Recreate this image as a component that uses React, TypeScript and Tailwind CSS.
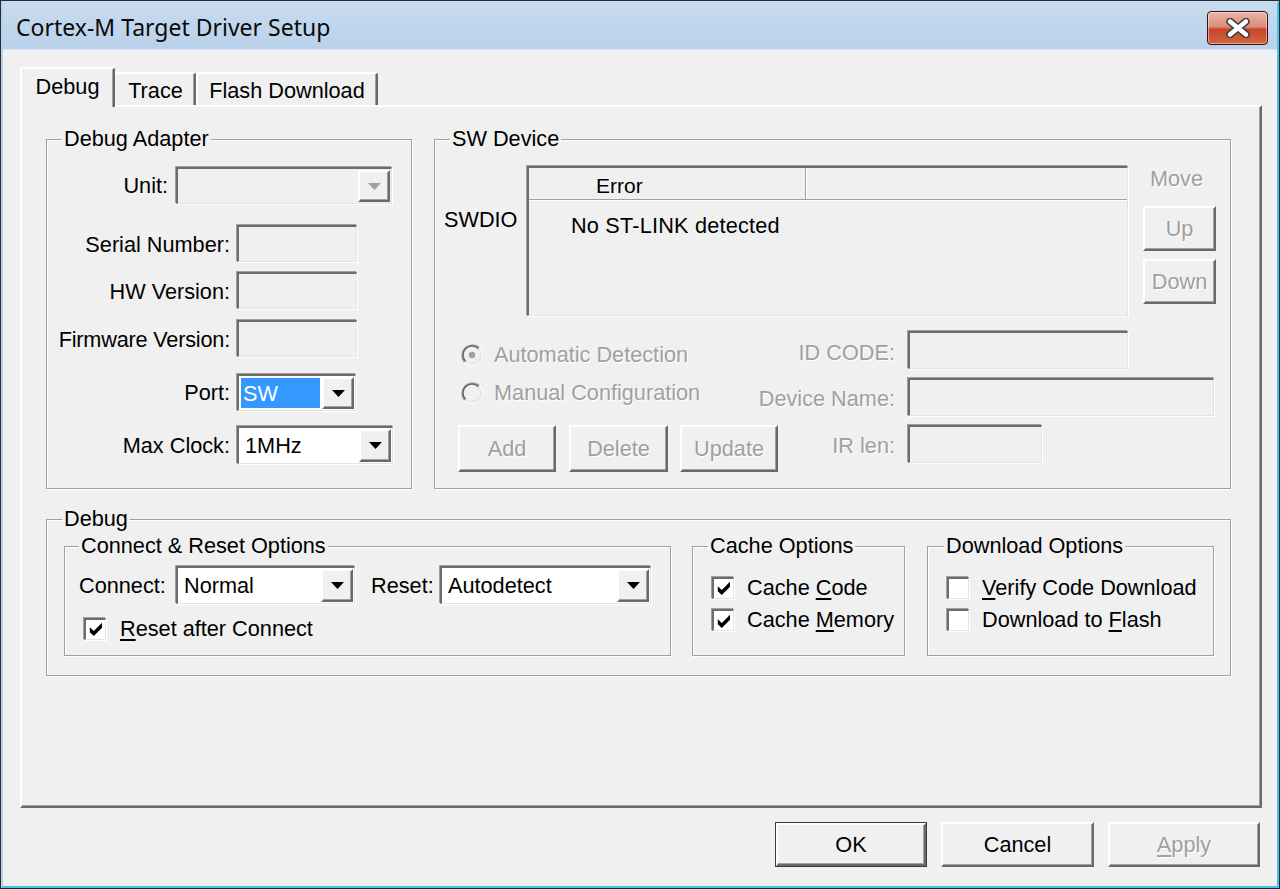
import React from "react";

const SUNKEN =
  "border-t-2 border-l-2 border-b border-r border-t-[#6d6d6d] border-l-[#6d6d6d] border-b-[#e3e3e3] border-r-[#e3e3e3] shadow-[-1px_-1px_0_#a0a0a0,1px_1px_0_#ffffff]";
const RAISED =
  "border-t-2 border-l-2 border-b-2 border-r-2 border-t-white border-l-white border-b-[#696969] border-r-[#696969] shadow-[inset_-1px_-1px_0_#a0a0a0]";
const DIS = "text-[#a0a0a0] [text-shadow:1px_1px_0_#ffffff]";

function Group({
  title,
  cls,
  titleCls,
  children,
}: {
  title: string;
  cls: string;
  titleCls: string;
  children?: React.ReactNode;
}) {
  return (
    <div
      className={`shrink-0 flex flex-col border border-[#a0a0a0] shadow-[inset_1px_1px_0_#ffffff,1px_1px_0_#ffffff] ${cls}`}
    >
      <div className="flex h-[12px] shrink-0">
        <span className={`-mt-[13px] h-[24px] px-[2px] bg-[#f0f0f0] whitespace-nowrap ${titleCls}`}>
          {title}
        </span>
      </div>
      {children}
    </div>
  );
}

function Arrow({ disabled }: { disabled?: boolean }) {
  return (
    <div
      className={`w-[32px] my-[1px] mr-[1px] shrink-0 flex items-center justify-center bg-[#f0f0f0] ${RAISED}`}
    >
      <svg width="13" height="7" viewBox="0 0 13 7">
        <path d="M0 0 H13 L6.5 7 Z" fill={disabled ? "#a0a0a0" : "#000000"} />
      </svg>
    </div>
  );
}

function Combo({
  cls,
  value,
  sel,
  disabled,
}: {
  cls: string;
  value?: string;
  sel?: boolean;
  disabled?: boolean;
}) {
  return (
    <div className={`flex shrink-0 ${disabled ? "bg-[#f0f0f0]" : "bg-white"} ${SUNKEN} ${cls}`}>
      <div className="flex-1 flex items-center p-[2px] min-w-0">
        {sel ? (
          <span className="h-full w-full bg-[#3399ff] text-white flex items-center pl-[2px] pt-[1px]">
            {value}
          </span>
        ) : (
          <span className="pl-[4px] pt-[1px] whitespace-nowrap">{value}</span>
        )}
      </div>
      <Arrow disabled={disabled} />
    </div>
  );
}

function Box({ cls }: { cls: string }) {
  return <div className={`shrink-0 bg-[#f0f0f0] ${SUNKEN} ${cls}`} />;
}

function Btn({
  cls,
  disabled,
  children,
}: {
  cls: string;
  disabled?: boolean;
  children: React.ReactNode;
}) {
  return (
    <div
      className={`shrink-0 flex items-center justify-center bg-[#f0f0f0] ${RAISED} ${disabled ? DIS : ""} ${cls}`}
    >
      {children}
    </div>
  );
}

function Check({ checked }: { checked?: boolean }) {
  return (
    <div className={`w-[22px] h-[22px] shrink-0 bg-white flex items-center justify-center ${SUNKEN}`}>
      {checked && (
        <svg width="16" height="16" viewBox="0 0 16 16">
          <path d="M1.8 6.2 L5.8 10 L14 1.8 L14 6.8 L5.8 15 L1.8 11.2 Z" fill="#000000" />
        </svg>
      )}
    </div>
  );
}

function Radio({ checked }: { checked?: boolean }) {
  return (
    <svg width="24" height="24" viewBox="0 0 24 24" className="shrink-0">
      <circle cx="12" cy="12" r="10" fill="#f0f0f0" />
      <path d="M19.4 4.6 A10.5 10.5 0 0 0 4.6 19.4" stroke="#a0a0a0" strokeWidth="1.6" fill="none" />
      <path d="M18.4 5.6 A9 9 0 0 0 5.6 18.4" stroke="#696969" strokeWidth="1.6" fill="none" />
      <path d="M4.6 19.4 A10.5 10.5 0 0 0 19.4 4.6" stroke="#ffffff" strokeWidth="1.6" fill="none" />
      <path d="M5.6 18.4 A9 9 0 0 0 18.4 5.6" stroke="#e3e3e3" strokeWidth="1.6" fill="none" />
      {checked && <circle cx="12" cy="12" r="3.2" fill="#a0a0a0" />}
    </svg>
  );
}

export default function App() {
  return (
    <div className="w-[1280px] h-[889px] overflow-hidden border border-[#2b2b2b] bg-[#f0f0f0] font-['Liberation_Sans',Arial,sans-serif] text-[21.7px] leading-[24px] text-black">
      <div className="h-full flex flex-col border-2 border-t-[#c5d9ef] border-l-[#b9d1ea] border-r-[#3ec6ee] border-b-[#3ec6ee]">
        {/* Title bar */}
        <div className="h-[47px] shrink-0 flex items-center bg-[linear-gradient(to_bottom,#c8dbf0,#b9d1ea)] border-b border-b-[#dce7f3]">
          <span className="ml-[13px] mt-[1px] font-['Noto_Sans',sans-serif] text-[23px] leading-[30px] text-[#0a0a0a]">
            Cortex-M Target Driver Setup
          </span>
          <div className="ml-auto mr-[9px] mt-[3px] w-[61px] h-[34px] rounded-[4px] border border-[#3b0d0d] bg-[linear-gradient(to_bottom,#ebb4a5_0%,#dc8d7a_46%,#c7462a_54%,#d2653f_100%)] shadow-[inset_0_0_0_1px_rgba(255,255,255,0.45)] flex items-center justify-center">
            <svg width="26" height="20" viewBox="0 0 26 20">
              <path d="M5 3.5 L21 16.5 M21 3.5 L5 16.5" stroke="#3f3f3f" strokeWidth="7.5" strokeLinecap="round" />
              <path d="M5 3.5 L21 16.5 M21 3.5 L5 16.5" stroke="#ffffff" strokeWidth="4.5" strokeLinecap="round" />
            </svg>
          </div>
        </div>

        {/* Body */}
        <div className="flex-1 flex flex-col pl-[17px] pr-[15px] pt-[17px]">
          {/* Tabs */}
          <div className="h-[38px] shrink-0 flex items-end">
            <div className="relative z-10 w-[95px] h-[40px] -mb-[2px] bg-[#f0f0f0] rounded-t-[3px] border-t-2 border-l-2 border-r-2 border-t-white border-l-white border-r-[#696969] shadow-[inset_-1px_0_0_#a0a0a0] flex items-center justify-center pb-[2px]">
              Debug
            </div>
            <div className="w-[83px] h-[33px] -ml-[2px] bg-[#f0f0f0] rounded-t-[3px] border-t-2 border-l-2 border-r-2 border-t-white border-l-white border-r-[#696969] shadow-[inset_-1px_0_0_#a0a0a0] flex items-center justify-center pt-[2px] pl-[2px]">
              Trace
            </div>
            <div className="w-[182px] h-[33px] bg-[#f0f0f0] rounded-t-[3px] border-t-2 border-l-2 border-r-2 border-t-white border-l-white border-r-[#696969] shadow-[inset_-1px_0_0_#a0a0a0] flex items-center justify-center pt-[2px]">
              Flash Download
            </div>
          </div>

          {/* Panel */}
          <div className="w-[1242px] h-[703px] shrink-0 flex flex-col pl-[24px] pt-[32px] border-t-2 border-l-2 border-b-2 border-r-2 border-t-white border-l-white border-b-[#696969] border-r-[#696969] shadow-[inset_-1px_-1px_0_#a0a0a0]">
            <div className="flex">
              {/* Debug Adapter */}
              <Group title="Debug Adapter" cls="w-[366px] h-[350px]" titleCls="ml-[15px]">
                <div className="mt-[15px] h-[37px] flex items-center">
                  <span className="w-[121px] text-right">Unit:</span>
                  <Combo cls="ml-[8px] w-[216px] h-[37px]" disabled />
                </div>
                <div className="mt-[21px] h-[37px] flex items-center">
                  <span className="w-[183px] text-right pt-[3px]">Serial Number:</span>
                  <Box cls="ml-[7px] w-[120px] h-[37px]" />
                </div>
                <div className="mt-[10px] h-[37px] flex items-center">
                  <span className="w-[183px] text-right pt-[2px]">HW Version:</span>
                  <Box cls="ml-[7px] w-[120px] h-[37px]" />
                </div>
                <div className="mt-[11px] h-[37px] flex items-center">
                  <span className="w-[183px] text-right whitespace-nowrap pt-[2px] tracking-[-0.2px]">Firmware Version:</span>
                  <Box cls="ml-[7px] w-[120px] h-[37px]" />
                </div>
                <div className="mt-[17px] h-[37px] flex items-center">
                  <span className="w-[183px] text-right">Port:</span>
                  <Combo cls="ml-[7px] w-[119px] h-[37px]" value="SW" sel />
                </div>
                <div className="mt-[15px] h-[38px] flex items-center">
                  <span className="w-[183px] text-right pt-[2px]">Max Clock:</span>
                  <Combo cls="ml-[7px] w-[156px] h-[38px]" value="1MHz" />
                </div>
              </Group>

              {/* SW Device */}
              <Group title="SW Device" cls="ml-[22px] w-[797px] h-[350px]" titleCls="ml-[15px]">
                <div className="mt-[14px] flex items-start">
                  <div className="w-[92px] shrink-0 pl-[9px] pt-[42px]">SWDIO</div>
                  <div className={`w-[601px] h-[150px] shrink-0 bg-[#f0f0f0] flex flex-col ${SUNKEN}`}>
                    <div className="h-[32px] shrink-0 flex border-b border-b-[#a0a0a0] shadow-[0_1px_0_#ffffff]">
                      <div className="w-[277px] h-full pl-[67px] pt-[5px] flex items-center text-[21px] border-r border-r-[#a0a0a0] shadow-[1px_0_0_#ffffff]">
                        Error
                      </div>
                      <div className="flex-1" />
                    </div>
                    <div className="pl-[42px] pt-[14px] tracking-[0.2px]">No ST-LINK detected</div>
                  </div>
                  <div className="ml-[15px] w-[73px] shrink-0 flex flex-col">
                    <div className={`h-[24px] text-center pr-[6px] pt-[1px] ${DIS}`}>Move</div>
                    <Btn cls="mt-[16px] w-[73px] h-[45px]" disabled>
                      Up
                    </Btn>
                    <Btn cls="mt-[8px] w-[73px] h-[45px]" disabled>
                      Down
                    </Btn>
                  </div>
                </div>

                <div className="mt-[15px] flex">
                  <div className="ml-[23px] w-[320px] shrink-0 flex flex-col">
                    <div className="mt-[12px] h-[24px] flex items-center pl-[2px]">
                      <Radio checked />
                      <span className={`ml-[10px] whitespace-nowrap ${DIS}`}>Automatic Detection</span>
                    </div>
                    <div className="mt-[14px] h-[24px] flex items-center pl-[2px]">
                      <Radio />
                      <span className={`ml-[10px] whitespace-nowrap ${DIS}`}>Manual Configuration</span>
                    </div>
                    <div className="mt-[20px] flex">
                      <Btn cls="w-[98px] h-[47px]" disabled>
                        Add
                      </Btn>
                      <Btn cls="ml-[13px] w-[99px] h-[47px]" disabled>
                        Delete
                      </Btn>
                      <Btn cls="ml-[12px] w-[98px] h-[47px]" disabled>
                        Update
                      </Btn>
                    </div>
                  </div>
                  <div className="flex flex-col">
                    <div className="h-[38px] flex items-start">
                      <span className={`w-[117px] pt-[10px] flex justify-end whitespace-nowrap ${DIS}`}>ID CODE:</span>
                      <Box cls="ml-[13px] w-[220px] h-[38px]" />
                    </div>
                    <div className="mt-[9px] h-[38px] flex items-start">
                      <span className={`w-[117px] pt-[9px] flex justify-end whitespace-nowrap ${DIS}`}>Device Name:</span>
                      <Box cls="ml-[13px] w-[306px] h-[38px]" />
                    </div>
                    <div className="mt-[9px] h-[38px] flex items-start">
                      <span className={`w-[117px] pt-[9px] flex justify-end whitespace-nowrap ${DIS}`}>IR len:</span>
                      <Box cls="ml-[13px] w-[134px] h-[38px]" />
                    </div>
                  </div>
                </div>
              </Group>
            </div>

            {/* Debug group */}
            <Group title="Debug" cls="mt-[30px] w-[1185px] h-[157px]" titleCls="ml-[15px]">
              <div className="mt-[14px] pl-[17px] flex">
                <Group title="Connect & Reset Options" cls="w-[607px] h-[110px]" titleCls="ml-[14px]">
                  <div className="mt-[7px] h-[38px] flex items-center pl-[14px]">
                    <span className="w-[97px] shrink-0 pt-[1px]">Connect:</span>
                    <Combo cls="w-[179px] h-[38px]" value="Normal" />
                    <span className="ml-[16px] w-[69px] shrink-0 pt-[1px]">Reset:</span>
                    <Combo cls="w-[211px] h-[38px]" value="Autodetect" />
                  </div>
                  <div className="mt-[12px] flex items-center pl-[19px]">
                    <Check checked />
                    <span className="ml-[14px] pt-[1px]">
                      <span className="underline underline-offset-[3px]">R</span>eset after Connect
                    </span>
                  </div>
                </Group>

                <Group title="Cache Options" cls="ml-[21px] w-[213px] h-[110px]" titleCls="ml-[15px]">
                  <div className="mt-[16px] flex items-center pl-[19px]">
                    <Check checked />
                    <span className="ml-[13px] whitespace-nowrap pt-[1px]">
                      Cache <span className="underline underline-offset-[3px]">C</span>ode
                    </span>
                  </div>
                  <div className="mt-[8px] flex items-center pl-[19px]">
                    <Check checked />
                    <span className="ml-[13px] whitespace-nowrap">
                      Cache <span className="underline underline-offset-[3px]">M</span>emory
                    </span>
                  </div>
                </Group>

                <Group title="Download Options" cls="ml-[22px] w-[287px] h-[110px]" titleCls="ml-[16px]">
                  <div className="mt-[16px] flex items-center pl-[19px]">
                    <Check />
                    <span className="ml-[13px] whitespace-nowrap pt-[1px]">
                      <span className="underline underline-offset-[3px]">V</span>erify Code Download
                    </span>
                  </div>
                  <div className="mt-[8px] flex items-center pl-[19px]">
                    <Check />
                    <span className="ml-[13px] whitespace-nowrap">
                      Download to <span className="underline underline-offset-[3px]">F</span>lash
                    </span>
                  </div>
                </Group>
              </div>
            </Group>
          </div>

          {/* Bottom buttons */}
          <div className="mt-[14px] flex justify-end pr-[2px]">
            <div className="w-[152px] h-[45px] border border-[#3a3a3a] flex">
              <div className={`flex-1 flex items-center justify-center bg-[#f0f0f0] ${RAISED}`}>OK</div>
            </div>
            <Btn cls="ml-[14px] w-[153px] h-[45px]">Cancel</Btn>
            <Btn cls="ml-[14px] w-[152px] h-[45px]" disabled>
              <span>
                <span className="underline underline-offset-[3px]">A</span>pply
              </span>
            </Btn>
          </div>
        </div>
      </div>
    </div>
  );
}
